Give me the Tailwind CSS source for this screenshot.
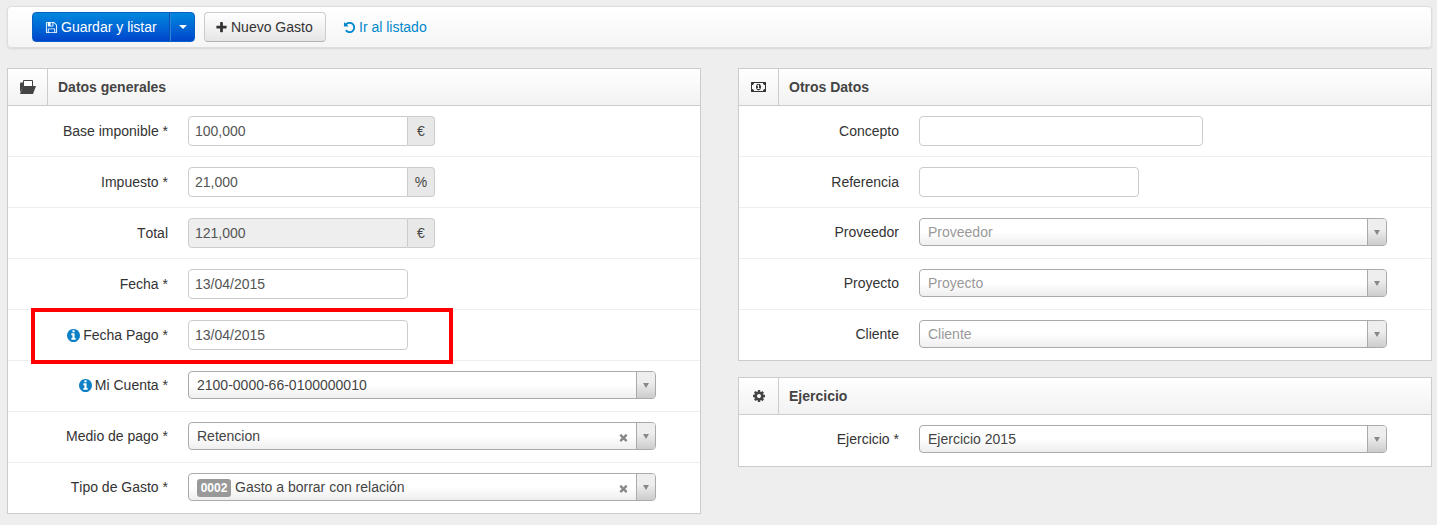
<!DOCTYPE html>
<html lang="es">
<head>
<meta charset="utf-8">
<title>Gasto</title>
<script src="https://cdn.jsdelivr.net/npm/@tailwindcss/browser@4"></script>
</head>
<body class="relative h-[525px] overflow-hidden bg-[#eeeeee] font-['Liberation_Sans',Arial,sans-serif] text-[14px] leading-[20px] text-[#333333] [font-kerning:none]">
<div class="pl-[7px] pt-[6px]">
  <!-- toolbar -->
  <div class="flex h-[42px] w-[1425px] items-center rounded-[4px] border border-[#dddddd] bg-linear-to-b from-white to-[#f5f5f5] pl-[24px] shadow-[0_1px_2px_rgba(0,0,0,0.1)]">
    <div class="flex h-[30px] w-[163px] rounded-[4px] border border-[#0a5fc4] bg-linear-to-b from-[#0088dd] to-[#0044cc] text-white">
      <div class="flex w-[137px] items-center border-r border-[#0a4fae] pl-[12px]">
        <svg class="mr-[3px] h-[13px] w-[13px] shrink-0" viewBox="0 0 1792 1792" fill="currentColor"><path d="M512 1536h768v-384h-768v384zm896 0h128v-896q0-14-10-38.5t-20-34.5l-281-281q-10-10-34-20t-39-10v416q0 40-28 68t-68 28h-576q-40 0-68-28t-28-68v-416h-128v1280h128v-416q0-40 28-68t68-28h832q40 0 68 28t28 68v416zm-384-928v-320q0-13-9.5-22.5t-22.5-9.5h-192q-13 0-22.5 9.5t-9.5 22.5v320q0 13 9.5 22.5t22.5 9.5h192q13 0 22.5-9.5t9.5-22.5zm640 32v928q0 40-28 68t-68 28h-1344q-40 0-68-28t-28-68v-1344q0-40 28-68t68-28h928q40 0 88 20t76 48l280 280q28 28 48 76t20 88z"/></svg>
        <span>Guardar y listar</span>
      </div>
      <div class="flex flex-1 items-center justify-center border-l border-[#2a86dc]">
        <span class="h-0 w-0 border-x-[4px] border-t-[4px] border-x-transparent border-t-white"></span>
      </div>
    </div>
    <div class="ml-[9px] flex h-[30px] w-[122px] items-center rounded-[4px] border border-[#cccccc] border-b-[#b3b3b3] bg-linear-to-b from-white to-[#e6e6e6] pl-[10px]">
      <svg class="mr-[3px] h-[13px] w-[13px] shrink-0" viewBox="0 0 1792 1792" fill="#333333"><path d="M1600 736v192q0 40-28 68t-68 28h-416v416q0 40-28 68t-68 28h-192q-40 0-68-28t-28-68v-416h-416q-40 0-68-28t-28-68v-192q0-40 28-68t68-28h416v-416q0-40 28-68t68-28h192q40 0 68 28t28 68v416h416q40 0 68 28t28 68z"/></svg>
      <span>Nuevo Gasto</span>
    </div>
    <a class="ml-[17px] flex items-center text-[#0088cc]">
      <svg class="mr-[3px] h-[13px] w-[13px] shrink-0" viewBox="0 0 1792 1792" fill="currentColor"><path d="M1664 896q0 156-61 298t-164 245-245 164-298 61q-172 0-327-72.5t-264-204.5q-7-10-6.5-22.5t8.5-20.5l137-138q10-9 25-9 16 2 23 12 73 95 179 147t225 52q104 0 198.5-40.5t163.5-109.5 109.5-163.5 40.5-198.5-40.5-198.5-109.5-163.5-163.5-109.5-198.5-40.5q-98 0-188 35.5t-160 101.5l137 138q31 30 14 69-17 40-59 40h-448q-26 0-45-19t-19-45v-448q0-42 40-59 39-17 69 14l130 129q107-101 244.5-156.5t284.5-55.5q156 0 298 61t245 164 164 245 61 298z"/></svg>
      <span>Ir al listado</span>
    </a>
  </div>

  <div class="mt-[20px] flex items-start gap-[37px]">
    <!-- left panel -->
    <section class="w-[694px] shrink-0 border border-[#cccccc] bg-white">
      <header class="flex h-[37px] border-b border-[#cccccc] bg-linear-to-b from-white to-[#f2f2f2]">
        <div class="flex w-[40px] items-center justify-center border-r border-[#cccccc]">
          <svg class="h-[14px] w-[16px]" viewBox="0 0 16 14"><path d="M0 3.5Q0 2.5 1 2.5H3V7L0 12.5Z" fill="#444444"/><path d="M3.5 .5H12.5V6.5H3.5Z" fill="#ffffff" stroke="#444444"/><path d="M3 6H16L13 14H0Z" fill="#444444"/></svg>
        </div>
        <h2 class="pl-[10px] text-[14px] leading-[36px] font-bold text-[#444444]">Datos generales</h2>
      </header>

      <div class="flex h-[50px] pt-[10px]">
        <label class="w-[160px] text-right leading-[30px]">Base imponible *</label>
        <div class="ml-[20px] flex h-[30px]">
          <div class="w-[220px] rounded-l-[4px] border border-[#cccccc] bg-white px-[6px] leading-[28px] text-[#555555]">100,000</div>
          <div class="w-[27px] rounded-r-[4px] border border-l-0 border-[#cccccc] bg-[#e8e8e8] text-center leading-[28px] text-[#444444]">€</div>
        </div>
      </div>
      <div class="flex h-[51px] border-t border-[#eeeeee] pt-[10px]">
        <label class="w-[160px] text-right leading-[30px]">Impuesto *</label>
        <div class="ml-[20px] flex h-[30px]">
          <div class="w-[220px] rounded-l-[4px] border border-[#cccccc] bg-white px-[6px] leading-[28px] text-[#555555]">21,000</div>
          <div class="w-[27px] rounded-r-[4px] border border-l-0 border-[#cccccc] bg-[#e8e8e8] text-center leading-[28px] text-[#444444]">%</div>
        </div>
      </div>
      <div class="flex h-[51px] border-t border-[#eeeeee] pt-[10px]">
        <label class="w-[160px] text-right leading-[30px]">Total</label>
        <div class="ml-[20px] flex h-[30px]">
          <div class="w-[220px] rounded-l-[4px] border border-[#cccccc] bg-[#eeeeee] px-[6px] leading-[28px] text-[#555555]">121,000</div>
          <div class="w-[27px] rounded-r-[4px] border border-l-0 border-[#cccccc] bg-[#e8e8e8] text-center leading-[28px] text-[#444444]">€</div>
        </div>
      </div>
      <div class="flex h-[51px] border-t border-[#eeeeee] pt-[10px]">
        <label class="w-[160px] text-right leading-[30px]">Fecha *</label>
        <div class="ml-[20px] h-[30px] w-[220px] rounded-[4px] border border-[#cccccc] bg-white px-[6px] leading-[28px] text-[#555555]">13/04/2015</div>
      </div>
      <div class="flex h-[51px] border-t border-[#eeeeee] pt-[10px]">
        <label class="flex h-[30px] w-[160px] items-center justify-end">
          <svg class="mr-[3px] h-[13px] w-[13px]" viewBox="128 128 1536 1536" fill="#0e80c6"><path d="M1152 1376v-160q0-14-9-23t-23-9h-96v-512q0-14-9-23t-23-9h-320q-14 0-23 9t-9 23v160q0 14 9 23t23 9h96v320h-96q-14 0-23 9t-9 23v160q0 14 9 23t23 9h448q14 0 23-9t9-23zm-128-896v-160q0-14-9-23t-23-9h-192q-14 0-23 9t-9 23v160q0 14 9 23t23 9h192q14 0 23-9t9-23zm640 416q0 209-103 385.5t-279.5 279.5-385.5 103-385.5-103-279.5-279.5-103-385.5 103-385.5 279.5-279.5 385.5-103 385.5 103 279.5 279.5 103 385.5z"/></svg>
          Fecha Pago *
        </label>
        <div class="ml-[20px] h-[30px] w-[220px] rounded-[4px] border border-[#cccccc] bg-white px-[6px] leading-[28px] text-[#555555]">13/04/2015</div>
      </div>
      <div class="flex h-[51px] border-t border-[#eeeeee] pt-[10px]">
        <label class="flex h-[28px] w-[160px] items-center justify-end">
          <svg class="mr-[3px] h-[13px] w-[13px]" viewBox="128 128 1536 1536" fill="#0e80c6"><path d="M1152 1376v-160q0-14-9-23t-23-9h-96v-512q0-14-9-23t-23-9h-320q-14 0-23 9t-9 23v160q0 14 9 23t23 9h96v320h-96q-14 0-23 9t-9 23v160q0 14 9 23t23 9h448q14 0 23-9t9-23zm-128-896v-160q0-14-9-23t-23-9h-192q-14 0-23 9t-9 23v160q0 14 9 23t23 9h192q14 0 23-9t9-23zm640 416q0 209-103 385.5t-279.5 279.5-385.5 103-385.5-103-279.5-279.5-103-385.5 103-385.5 279.5-279.5 385.5-103 385.5 103 279.5 279.5 103 385.5z"/></svg>
          Mi Cuenta *
        </label>
        <div class="ml-[20px] flex h-[28px] w-[468px] overflow-hidden rounded-[4px] border border-[#aaaaaa] bg-linear-to-b from-white from-50% to-[#eeeeee]">
          <div class="flex-1 pl-[8px] leading-[26px] text-[#444444]">2100-0000-66-0100000010</div>
          <div class="flex w-[19px] items-center justify-center border-l border-[#aaaaaa] bg-linear-to-b from-[#eeeeee] from-40% to-[#cccccc]"><span class="h-0 w-0 border-x-[3px] border-t-[5px] border-x-transparent border-t-[#888888]"></span></div>
        </div>
      </div>
      <div class="flex h-[51px] border-t border-[#eeeeee] pt-[10px]">
        <label class="w-[160px] text-right leading-[28px]">Medio de pago *</label>
        <div class="ml-[20px] flex h-[28px] w-[468px] overflow-hidden rounded-[4px] border border-[#aaaaaa] bg-linear-to-b from-white from-50% to-[#eeeeee]">
          <div class="flex-1 pl-[8px] leading-[26px] text-[#444444]">Retencion</div>
          <div class="flex w-[25px] items-center justify-center pt-[3px]"><svg class="h-[9px] w-[9px]" viewBox="200 200 1400 1400" fill="#888888"><path d="M1490 1322q0 40-28 68l-136 136q-28 28-68 28t-68-28l-294-294-294 294q-28 28-68 28t-68-28l-136-136q-28-28-28-68t28-68l294-294-294-294q-28-28-28-68t28-68l136-136q28-28 68-28t68 28l294 294 294-294q28-28 68-28t68 28l136 136q28 28 28 68t-28 68l-294 294 294 294q28 28 28 68z"/></svg></div>
          <div class="flex w-[19px] items-center justify-center border-l border-[#aaaaaa] bg-linear-to-b from-[#eeeeee] from-40% to-[#cccccc]"><span class="h-0 w-0 border-x-[3px] border-t-[5px] border-x-transparent border-t-[#888888]"></span></div>
        </div>
      </div>
      <div class="flex h-[51px] border-t border-[#eeeeee] pt-[10px]">
        <label class="w-[160px] text-right leading-[28px]">Tipo de Gasto *</label>
        <div class="ml-[20px] flex h-[28px] w-[468px] overflow-hidden rounded-[4px] border border-[#aaaaaa] bg-linear-to-b from-white from-50% to-[#eeeeee]">
          <div class="flex flex-1 items-center pl-[8px] text-[#444444]">
            <span class="mr-[4px] mt-[1px] h-[18px] w-[34px] rounded-[3px] bg-[#999999] text-center text-[12px] leading-[18px] font-bold text-white">0002</span>
            <span>Gasto a borrar con relación</span>
          </div>
          <div class="flex w-[25px] items-center justify-center pt-[3px]"><svg class="h-[9px] w-[9px]" viewBox="200 200 1400 1400" fill="#888888"><path d="M1490 1322q0 40-28 68l-136 136q-28 28-68 28t-68-28l-294-294-294 294q-28 28-68 28t-68-28l-136-136q-28-28-28-68t28-68l294-294-294-294q-28-28-28-68t28-68l136-136q28-28 68-28t68 28l294 294 294-294q28-28 68-28t68 28l136 136q28 28 28 68t-28 68l-294 294 294 294q28 28 28 68z"/></svg></div>
          <div class="flex w-[19px] items-center justify-center border-l border-[#aaaaaa] bg-linear-to-b from-[#eeeeee] from-40% to-[#cccccc]"><span class="h-0 w-0 border-x-[3px] border-t-[5px] border-x-transparent border-t-[#888888]"></span></div>
        </div>
      </div>
    </section>

    <!-- right column -->
    <div class="flex w-[694px] shrink-0 flex-col gap-[16px]">
      <section class="border border-[#cccccc] bg-white">
        <header class="flex h-[37px] border-b border-[#cccccc] bg-linear-to-b from-white to-[#f2f2f2]">
          <div class="flex w-[40px] items-center justify-center border-r border-[#cccccc]">
            <svg class="h-[14px] w-[16px]" viewBox="0 0 2048 1792" fill="#333333"><path d="M768 1152h384v-96h-128v-448h-114l-148 137 77 80q42-37 55-57h2v288h-128v96zm512-256q0 70-21 142t-59.5 134-101.5 101-138 39-138-39-101.5-101-59.5-134-21-142 21-142 59.5-134 101.5-101 138-39 138 39 101.5 101 59.5 134 21 142zm512 256v-512q-106 0-181-75t-75-181h-1152q0 106-75 181t-181 75v512q106 0 181 75t75 181h1152q0-106 75-181t181-75zm128-832v1152q0 26-19 45t-45 19h-1792q-26 0-45-19t-19-45v-1152q0-26 19-45t45-19h1792q26 0 45 19t19 45z"/></svg>
          </div>
          <h2 class="pl-[10px] text-[14px] leading-[36px] font-bold text-[#444444]">Otros Datos</h2>
        </header>
        <div class="flex h-[50px] pt-[10px]">
          <label class="w-[160px] text-right leading-[30px]">Concepto</label>
          <div class="ml-[20px] h-[30px] w-[284px] rounded-[4px] border border-[#cccccc] bg-white"></div>
        </div>
        <div class="flex h-[51px] border-t border-[#eeeeee] pt-[10px]">
          <label class="w-[160px] text-right leading-[30px]">Referencia</label>
          <div class="ml-[20px] h-[30px] w-[220px] rounded-[4px] border border-[#cccccc] bg-white"></div>
        </div>
        <div class="flex h-[51px] border-t border-[#eeeeee] pt-[10px]">
          <label class="w-[160px] text-right leading-[28px]">Proveedor</label>
          <div class="ml-[20px] flex h-[28px] w-[468px] overflow-hidden rounded-[4px] border border-[#aaaaaa] bg-linear-to-b from-white from-50% to-[#eeeeee]">
            <div class="flex-1 pl-[8px] leading-[26px] text-[#999999]">Proveedor</div>
            <div class="flex w-[19px] items-center justify-center border-l border-[#aaaaaa] bg-linear-to-b from-[#eeeeee] from-40% to-[#cccccc]"><span class="h-0 w-0 border-x-[3px] border-t-[5px] border-x-transparent border-t-[#888888]"></span></div>
          </div>
        </div>
        <div class="flex h-[51px] border-t border-[#eeeeee] pt-[10px]">
          <label class="w-[160px] text-right leading-[28px]">Proyecto</label>
          <div class="ml-[20px] flex h-[28px] w-[468px] overflow-hidden rounded-[4px] border border-[#aaaaaa] bg-linear-to-b from-white from-50% to-[#eeeeee]">
            <div class="flex-1 pl-[8px] leading-[26px] text-[#999999]">Proyecto</div>
            <div class="flex w-[19px] items-center justify-center border-l border-[#aaaaaa] bg-linear-to-b from-[#eeeeee] from-40% to-[#cccccc]"><span class="h-0 w-0 border-x-[3px] border-t-[5px] border-x-transparent border-t-[#888888]"></span></div>
          </div>
        </div>
        <div class="flex h-[51px] border-t border-[#eeeeee] pt-[10px]">
          <label class="w-[160px] text-right leading-[28px]">Cliente</label>
          <div class="ml-[20px] flex h-[28px] w-[468px] overflow-hidden rounded-[4px] border border-[#aaaaaa] bg-linear-to-b from-white from-50% to-[#eeeeee]">
            <div class="flex-1 pl-[8px] leading-[26px] text-[#999999]">Cliente</div>
            <div class="flex w-[19px] items-center justify-center border-l border-[#aaaaaa] bg-linear-to-b from-[#eeeeee] from-40% to-[#cccccc]"><span class="h-0 w-0 border-x-[3px] border-t-[5px] border-x-transparent border-t-[#888888]"></span></div>
          </div>
        </div>
      </section>

      <section class="border border-[#cccccc] bg-white">
        <header class="flex h-[37px] border-b border-[#cccccc] bg-linear-to-b from-white to-[#f2f2f2]">
          <div class="flex w-[40px] items-center justify-center border-r border-[#cccccc]">
            <svg class="h-[12px] w-[12px]" viewBox="128 128 1536 1536" fill="#444444"><path d="M1152 896q0-106-75-181t-181-75-181 75-75 181 75 181 181 75 181-75 75-181zm512-109v222q0 12-8 23t-20 13l-185 28q-19 54-39 91 35 50 107 138 10 12 10 25t-9 23q-27 37-99 108t-94 71q-12 0-26-9l-138-108q-44 23-91 38-16 136-29 186-7 28-36 28h-222q-14 0-24.5-8.5t-11.5-21.5l-28-184q-49-16-90-37l-141 107q-10 9-25 9-14 0-25-11-126-114-165-168-7-10-7-23 0-12 8-23 15-21 51-66.5t54-70.5q-27-50-41-99l-183-27q-13-2-21-12.5t-8-23.5v-222q0-12 8-23t19-13l186-28q14-46 39-92-40-57-107-138-10-12-10-24 0-10 9-23 26-36 98.5-107.5t94.5-71.5q13 0 26 10l138 107q44-23 91-38 16-136 29-186 7-28 36-28h222q14 0 24.5 8.5t11.5 21.5l28 184q49 16 90 37l142-107q9-9 24-9 13 0 25 10 129 119 165 170 7 8 7 22 0 12-8 23-15 21-51 66.5t-54 70.5q26 50 41 98l183 28q13 2 21 12.5t8 23.5z"/></svg>
          </div>
          <h2 class="pl-[10px] text-[14px] leading-[36px] font-bold text-[#444444]">Ejercicio</h2>
        </header>
        <div class="flex h-[51px] pt-[10px]">
          <label class="w-[160px] text-right leading-[28px]">Ejercicio *</label>
          <div class="ml-[20px] flex h-[28px] w-[468px] overflow-hidden rounded-[4px] border border-[#aaaaaa] bg-linear-to-b from-white from-50% to-[#eeeeee]">
            <div class="flex-1 pl-[8px] leading-[26px] text-[#444444]">Ejercicio 2015</div>
            <div class="flex w-[19px] items-center justify-center border-l border-[#aaaaaa] bg-linear-to-b from-[#eeeeee] from-40% to-[#cccccc]"><span class="h-0 w-0 border-x-[3px] border-t-[5px] border-x-transparent border-t-[#888888]"></span></div>
          </div>
        </div>
      </section>
    </div>
  </div>
</div>
<!-- red annotation over the screenshot -->
<div class="absolute top-[308px] left-[31px] h-[56px] w-[422px] border-[4px] border-[#ff0000]"></div>
</body>
</html>
